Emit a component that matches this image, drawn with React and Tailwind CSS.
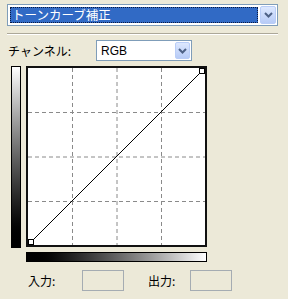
import React from 'react';

const font = { fontFamily: '"Noto Sans CJK JP", "Liberation Sans", sans-serif' };

function ArrowButton({ className = '' }) {
  return (
    <div className={`flex items-center justify-center rounded-[2px] border border-[#b9cdf7] bg-gradient-to-b from-[#dde8fe] to-[#b7cbf6] ${className}`}>
      <svg width="9" height="6" viewBox="0 0 9 6">
        <path d="M1 1 L4.5 4.5 L8 1" fill="none" stroke="#4d6185" strokeWidth="2" />
      </svg>
    </div>
  );
}

function Graph() {
  const lines = [44.5, 89, 133.5];
  return (
    <div className="w-[181px] h-[181px] border-2 border-[#111] bg-white">
      <svg width="177" height="177" viewBox="0 0 177 177" className="block">
        {lines.map((p) => (
          <g key={p}>
            <line x1={p} y1="0" x2={p} y2="177" stroke="#8a8a8a" strokeDasharray="4 3" />
            <line x1="0" y1={p} x2="177" y2={p} stroke="#8a8a8a" strokeDasharray="4 3" />
          </g>
        ))}
        <line x1="2" y1="175" x2="175" y2="2" stroke="#000" strokeWidth="1" />
        <rect x="0.5" y="171.5" width="5" height="5" fill="#fff" stroke="#000" />
        <rect x="171.5" y="0.5" width="5" height="5" fill="#fff" stroke="#000" />
      </svg>
    </div>
  );
}

export default function App() {
  return (
    <div className="w-[288px] h-[299px] bg-[#ece9d8] flex flex-col text-[12px] text-black leading-none" style={font}>
      {/* Tool select */}
      <div className="mt-[4px] ml-[7px] w-[271px] h-[22px] border border-[#7f9db9] bg-white flex items-stretch p-[1px]">
        <div className="flex-1 m-[1px] bg-[#316ac5] border border-dotted border-[#0b1a40] text-white flex items-center pl-[1px] text-[12.5px]">
          トーンカーブ補正
        </div>
        <ArrowButton className="w-[16px] ml-[1px]" />
      </div>

      {/* Separator */}
      <div className="mt-[7px] ml-[7px] w-[271px] border-t border-[#aca899] border-b border-b-white" />

      {/* Channel */}
      <div className="mt-[5px] flex items-center">
        <span className="ml-[8px] w-[88px]">チャンネル:</span>
        <div className="w-[96px] h-[21px] border border-[#7f9db9] bg-white flex items-stretch p-[1px]">
          <span className="flex-1 flex items-center pl-[3px] text-[12px]" style={{ fontFamily: '"Liberation Sans", sans-serif' }}>RGB</span>
          <ArrowButton className="w-[15px]" />
        </div>
      </div>

      {/* Curve */}
      <div className="mt-[5px] flex">
        <div className="ml-[11px] w-[10px] h-[182px] border border-black bg-gradient-to-b from-white to-black" />
        <div className="ml-[5px]">
          <Graph />
          <div className="mt-[5px] w-[181px] h-[10px] border border-black bg-gradient-to-r from-black to-white" />
        </div>
      </div>

      {/* Input / output */}
      <div className="mt-[8px] flex items-center">
        <span className="ml-[28px] w-[54px]">入力:</span>
        <div className="w-[42px] h-[21px] border border-[#a5acb2] bg-[#ece9d8]" />
        <span className="ml-[24px] w-[42px]">出力:</span>
        <div className="w-[42px] h-[21px] border border-[#a5acb2] bg-[#ece9d8]" />
      </div>
    </div>
  );
}
